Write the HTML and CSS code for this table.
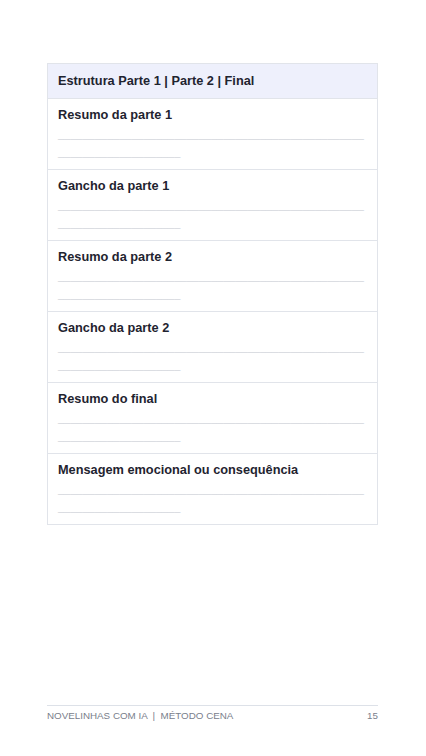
FILE: index.html
```html
<!DOCTYPE html>
<html lang="pt-BR">
<head>
    <meta charset="UTF-8">
    <meta name="viewport" content="width=device-width, initial-scale=1.0">
    <title>Estrutura Parte 1 | Parte 2 | Final</title>
    <link rel="stylesheet" href="styles.css">
</head>
<body>

<div class="page">
    <div class="sheet">
        <div class="sheet-header">Estrutura Parte 1 | Parte 2 | Final</div>

        <div class="sheet-row">
            <div class="row-title">Resumo da parte 1</div>
            <div class="row-lines">______________________________________________________________________</div>
        </div>
        <div class="sheet-row">
            <div class="row-title">Gancho da parte 1</div>
            <div class="row-lines">______________________________________________________________________</div>
        </div>
        <div class="sheet-row">
            <div class="row-title">Resumo da parte 2</div>
            <div class="row-lines">______________________________________________________________________</div>
        </div>
        <div class="sheet-row">
            <div class="row-title">Gancho da parte 2</div>
            <div class="row-lines">______________________________________________________________________</div>
        </div>
        <div class="sheet-row">
            <div class="row-title">Resumo do final</div>
            <div class="row-lines">______________________________________________________________________</div>
        </div>
        <div class="sheet-row">
            <div class="row-title">Mensagem emocional ou consequência</div>
            <div class="row-lines">______________________________________________________________________</div>
        </div>
    </div>

    <div class="footer">
        <span>NOVELINHAS COM IA &nbsp;|&nbsp; MÉTODO CENA</span>
        <span>15</span>
    </div>
</div>

</body>
</html>
```

FILE: styles.css
```css
body {
    font-family: 'Liberation Sans', Arial, sans-serif;
    margin: 0;
    background-color: #ffffff;
    color: #1f2430;
}
.page {
    min-height: 756px;
    box-sizing: border-box;
    padding: 63px 48px 34px 47px;
    display: flex;
    flex-direction: column;
}
.sheet {
    border: 1px solid #e1e4ea;
}
.sheet-header {
    background-color: #eef0fc;
    font-size: 12.75px;
    font-weight: bold;
    padding: 9px 10px 10px;
    line-height: 15px;
}
.sheet-row {
    border-top: 1px solid #e1e4ea;
    padding: 8px 10px 4px;
    height: 71px;
    box-sizing: border-box;
}
.row-title {
    font-size: 12.75px;
    font-weight: bold;
    line-height: 15px;
}
.row-lines {
    margin-top: 3px;
    font-size: 11px;
    line-height: 18px;
    color: #d3d6dc;
    word-break: break-all;
}
.footer {
    margin-top: auto;
    border-top: 1px solid #dde1e8;
    padding-top: 3px;
    display: flex;
    justify-content: space-between;
    font-size: 9.8px;
    line-height: 13px;
    color: #7a808c;
}
```
